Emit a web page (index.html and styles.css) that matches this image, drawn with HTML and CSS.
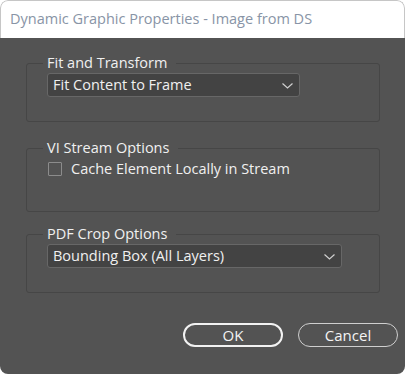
FILE: index.html
```html
<!DOCTYPE html>
<html lang="en">
<head>
  <meta charset="UTF-8" />
  <title>Dynamic Graphic Properties</title>
  <link rel="stylesheet" href="styles.css">
</head>
<body>
  <div class="dialog">
    <div class="titlebar">Dynamic Graphic Properties - Image from DS</div>

    <div class="content">
      <fieldset class="group group-fit">
        <legend>Fit and Transform</legend>
        <div class="select select-short">
          <span>Fit Content to Frame</span>
          <svg class="chevron" width="11" height="6" viewBox="0 0 11 6"><path d="M0.5 0.5 L5.5 5 L10.5 0.5" fill="none" stroke="#cfcfcf" stroke-width="1.2"/></svg>
        </div>
      </fieldset>

      <fieldset class="group group-stream">
        <legend>VI Stream Options</legend>
        <label class="check">
          <span class="box"></span>
          <span>Cache Element Locally in Stream</span>
        </label>
      </fieldset>

      <fieldset class="group group-crop">
        <legend>PDF Crop Options</legend>
        <div class="select select-long">
          <span>Bounding Box (All Layers)</span>
          <svg class="chevron" width="11" height="6" viewBox="0 0 11 6"><path d="M0.5 0.5 L5.5 5 L10.5 0.5" fill="none" stroke="#cfcfcf" stroke-width="1.2"/></svg>
        </div>
      </fieldset>

      <div class="buttons">
        <button class="btn btn-ok">OK</button>
        <button class="btn">Cancel</button>
      </div>
    </div>
  </div>
</body>
</html>
```

FILE: styles.css
```css
* { box-sizing: border-box; margin: 0; padding: 0; }

body {
  background: #ffffff;
  font-family: "Open Sans", "Noto Sans", sans-serif;
  width: 405px;
  height: 374px;
  overflow: hidden;
}

.dialog {
  width: 405px;
  height: 374px;
  display: flex;
  flex-direction: column;
  border-radius: 8px;
  overflow: hidden;
}

.titlebar {
  height: 38px;
  border: 1px solid #c6c6c6;
  border-bottom: none;
  border-radius: 8px 8px 0 0;
  background: #fff;
  color: #8894a6;
  font-size: 14.5px;
  line-height: 36px;
  padding-left: 9px;
  white-space: nowrap;
}

.content {
  flex: 1;
  background: #535353;
  padding: 17px 25px 0 26px;
  color: #f0f0f0;
  font-size: 14.5px;
}

.group {
  border: 1px solid #464646;
  border-radius: 3px;
  padding: 0 0 24px 20px;
}

.group legend {
  font-size: 14.5px;
  line-height: 16px;
  padding: 0 9px 0 4px;
  margin-left: -4px;
}

.group-stream { margin-top: 18px; padding-bottom: 34px; }
.group-crop { margin-top: 14px; padding-bottom: 24px; }

.select {
  margin-top: 2px;
  height: 24px;
  background: #434343;
  border: 1px solid #676767;
  border-radius: 3px;
  display: flex;
  align-items: center;
  justify-content: space-between;
  padding: 0 6px 0 5px;
  line-height: 20px;
}

.select-short { width: 253px; }
.select-long { width: 295px; margin-top: 2px; }

.chevron { display: block; margin-top: 1px; }

.check {
  margin-top: 5px;
  display: flex;
  align-items: center;
  gap: 9px;
  line-height: 16px;
  margin-left: 1px;
}

.box {
  width: 14px;
  height: 14px;
  border: 1px solid #8c8c8c;
  border-radius: 1px;
}

.buttons {
  display: flex;
  justify-content: flex-end;
  gap: 15px;
  margin-top: 30px;
  margin-right: -18px;
}

.btn {
  width: 100px;
  height: 24px;
  border-radius: 12px;
  border: 1px solid #cfcfcf;
  background: transparent;
  color: #f4f4f4;
  font-family: inherit;
  font-size: 15px;
  line-height: 20px;
}

.btn-ok {
  border: 2px solid #f2f2f2;
}
```
